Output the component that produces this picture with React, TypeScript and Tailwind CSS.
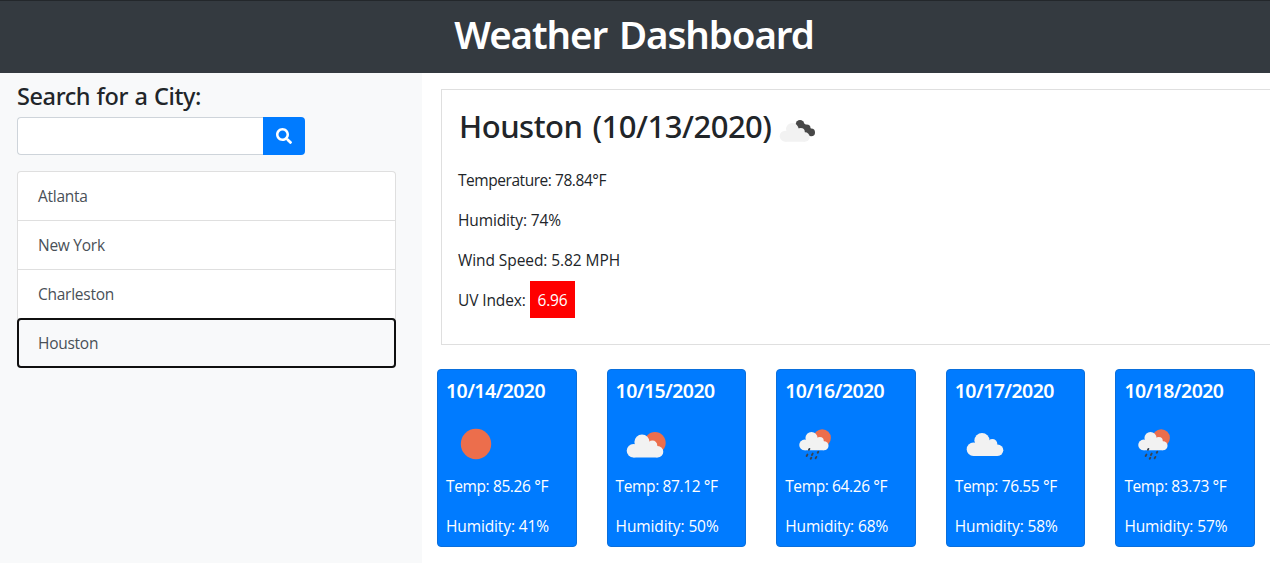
import { FaSearch } from "react-icons/fa";

type Sky = "sun" | "few" | "rain" | "cloud";

function Cloud() {
  return (
    <g fill="#f2f2f2">
      <circle cx="13.4" cy="30.2" r="6.7" />
      <circle cx="22" cy="21.6" r="7.6" />
      <circle cx="32.4" cy="25" r="4.9" />
      <circle cx="37.6" cy="31.2" r="5.7" />
      <path d="M13.4 36.9V24h8l11-2 5 4v10.9z" />
    </g>
  );
}

function SkyIcon({ sky }: { sky: Sky }) {
  return (
    <svg width="50" height="50" viewBox="0 0 50 50" className="block shrink-0">
      {sky === "sun" && <circle cx="25" cy="25" r="15.2" fill="#ec6e4c" />}
      {sky === "cloud" && <Cloud />}
      {sky === "few" && (
        <>
          <circle cx="34" cy="23.7" r="10.7" fill="#ec6e4c" />
          <g transform="translate(-1 1.5)">
            <Cloud />
          </g>
        </>
      )}
      {sky === "rain" && (
        <>
          <circle cx="32.2" cy="19" r="8.7" fill="#ec6e4c" />
          <g transform="translate(3.9 1.8) scale(0.8)">
            <Cloud />
          </g>
          <g stroke="#3a4450" strokeWidth="1.9" strokeLinecap="round">
            <path d="M19.4 29.9l-.5 .9" />
            <path d="M17.4 35.6l-.8 1.4M22.7 34.6l-.8 1.4M28.3 32.8l-.6 1M21.3 38.8l-.6 1M26.4 37.9l-.8 1.4" />
          </g>
        </>
      )}
    </svg>
  );
}

function BrokenCloudsIcon() {
  return (
    <svg width="50" height="50" viewBox="0 0 50 50" className="block shrink-0">
      <g fill="#484848">
        <circle cx="28" cy="18.4" r="4.3" />
        <circle cx="34.6" cy="22.6" r="4" />
        <circle cx="39.2" cy="26.4" r="3.8" />
        <path d="M26 21.5l5-5 10 8-3 5.4-6-3z" />
      </g>
      <g transform="translate(2.2 5.4) scale(0.82)">
        <Cloud />
      </g>
    </svg>
  );
}

const cities = ["Atlanta", "New York", "Charleston"];

const forecast: { date: string; sky: Sky; temp: string; humidity: string }[] = [
  { date: "10/14/2020", sky: "sun", temp: "85.26", humidity: "41" },
  { date: "10/15/2020", sky: "few", temp: "87.12", humidity: "50" },
  { date: "10/16/2020", sky: "rain", temp: "64.26", humidity: "68" },
  { date: "10/17/2020", sky: "cloud", temp: "76.55", humidity: "58" },
  { date: "10/18/2020", sky: "rain", temp: "83.73", humidity: "57" },
];

export default function App() {
  return (
    <div className="h-[582px] overflow-hidden bg-white font-['Open_Sans',sans-serif] text-[15.5px] leading-6 text-[#212529]">
      <header className="h-[73px] border-t border-[#23272b] bg-[#343a40] pt-[9px] pr-[2px]">
        <h1 className="text-center font-['Noto_Sans',sans-serif] text-[38.5px] leading-[48px] font-semibold tracking-[-1.1px] text-white [word-spacing:3px]">
          Weather Dashboard
        </h1>
      </header>

      <div className="flex">
        <aside className="h-[490px] w-[422px] shrink-0 bg-[#f8f9fa] pt-[9px] pr-[26px] pl-[17px]">
          <h3 className="mb-[7px] font-['Noto_Sans',sans-serif] text-[23.5px] leading-7 font-medium tracking-[-0.4px] [word-spacing:0.7px]">
            Search for a City:
          </h3>
          <form className="mb-4 flex h-[38px] w-72" onSubmit={(e) => e.preventDefault()}>
            <input
              aria-label="City"
              className="min-w-0 flex-1 rounded-l border border-r-0 border-[#ced4da] bg-white px-3 outline-none"
            />
            <button
              aria-label="Search"
              className="flex w-[42px] items-center justify-center rounded-r bg-[#007bff] text-white"
            >
              <FaSearch size={16} />
            </button>
          </form>
          <div className="flex flex-col tracking-[-0.26px] text-[#495057]">
            <div className="rounded-t border border-b-0 border-[#dfdfdf] bg-white">
              {cities.map((city) => (
                <button
                  key={city}
                  className="block h-[49px] w-full border-b border-[#dfdfdf] px-5 text-left last:border-b-0 last:pb-px"
                >
                  {city}
                </button>
              ))}
            </div>
            <button className="-mt-px h-[50px] rounded border-2 border-[#101010] bg-[#f8f9fa] px-[19px] text-left">
              Houston
            </button>
          </div>
        </aside>

        <main className="min-w-0 flex-1 pt-4 pl-[15px]">
          <section className="ml-1 h-[256px] border border-r-0 border-[#dfdfdf] pt-[17px] pl-4">
            <div className="mb-[23px] flex h-[38px] items-center">
              <h2 className="w-[314px] pl-px font-['Noto_Sans',sans-serif] text-[31px] leading-[38px] font-medium tracking-[-0.5px] whitespace-nowrap [word-spacing:2.5px]">
                Houston (10/13/2020)
              </h2>
              <div className="pt-2.5">
                <BrokenCloudsIcon />
              </div>
            </div>
            <div className="flex flex-col gap-4">
              <p className="tracking-[-0.45px]">Temperature: 78.84°F</p>
              <p className="tracking-[-0.12px]">Humidity: 74%</p>
              <p className="tracking-[-0.08px]">Wind Speed: 5.82 MPH</p>
              <div className="-mt-[3px] flex h-[37px] items-center">
                <p className="-mt-[7px] w-[72px] tracking-[-0.12px]">UV Index:</p>
                <span className="-mt-2 flex h-[37px] w-[45px] items-center justify-center bg-[#ff0000] tracking-[-0.15px] text-white">
                  6.96
                </span>
              </div>
            </div>
          </section>

          <section className="mt-6 flex gap-[30px]">
            {forecast.map((day) => (
              <article
                key={day.date}
                className="h-[178px] w-[139.6px] shrink-0 rounded border border-[#0a6fdc] bg-[#007bff] pt-[9px] pl-2 text-white"
              >
                <h5 className="mb-4 font-['Noto_Sans',sans-serif] text-[19.5px] leading-6 font-semibold tracking-[-0.58px]">
                  {day.date}
                </h5>
                <div className="mb-[5px] pl-[5px]">
                  <SkyIcon sky={day.sky} />
                </div>
                <p className="mb-4 tracking-[-0.38px]">Temp: {day.temp} °F</p>
                <p className="tracking-[-0.12px]">Humidity: {day.humidity}%</p>
              </article>
            ))}
          </section>
        </main>
      </div>
    </div>
  );
}
